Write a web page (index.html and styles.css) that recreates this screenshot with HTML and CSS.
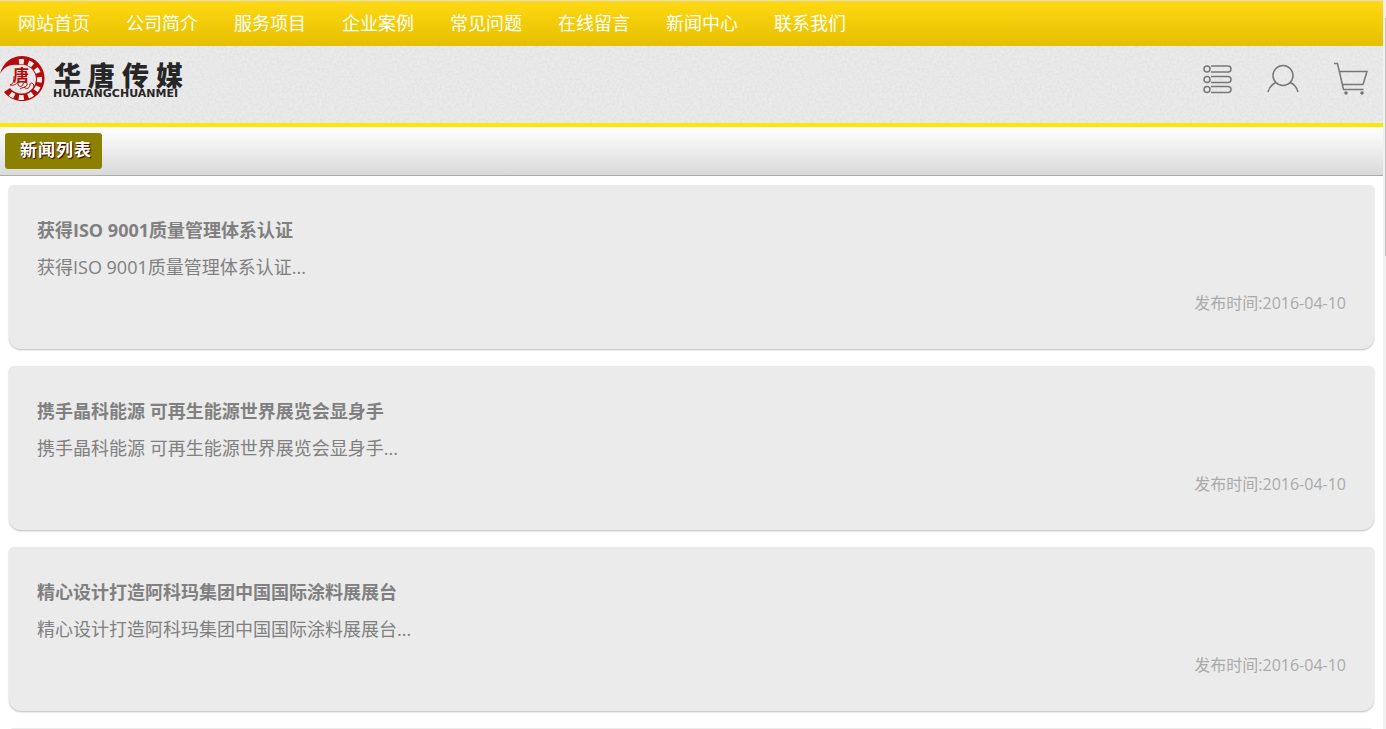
FILE: index.html
```
<!DOCTYPE html>
<html lang="zh-CN">
<head>
  <meta charset="UTF-8">
  <meta name="viewport" content="width=device-width, initial-scale=1.0">
  <title>新闻列表</title>
  <link rel="stylesheet" href="styles.css">
</head>
<body>

  <!-- Navigation -->
  <nav>
    <a href="#">网站首页</a>
    <a href="#">公司简介</a>
    <a href="#">服务项目</a>
    <a href="#">企业案例</a>
    <a href="#">常见问题</a>
    <a href="#">在线留言</a>
    <a href="#">新闻中心</a>
    <a href="#">联系我们</a>
  </nav>

  <!-- Header -->
  <header>
    <a class="logo" href="#" aria-label="华唐传媒">
      <svg width="190" height="50" viewBox="0 0 190 50">
        <path d="M0 21 C3 9 12 3 22 3 A22.500 22.500 0 1 1 4 39 L10 35 A14.500 14.500 0 1 0 18 12 C10 11 4 14 0 21 Z" fill="#b50a0a"/>
        <path class="logo-teeth" d="M19 8.700 A18 18 0 1 1 10.400 40.700"/>
        <text class="logo-seal" x="13" y="28">唐</text>
        <path d="M14 23 C14 29 13 31 10 32 C14 33 16 31 18 29 C17 34 22 35 23 31 C24 28 28 29 27 32 C26 35 22 34 20 36 M24 34 C27 37 30 35 30 31 C31 29 34 30 34 34" fill="none" stroke="#b50a0a" stroke-width="1"/>
        <g class="logo-name">
          <text x="54" y="33">华</text>
          <text x="88" y="33">唐</text>
          <text x="122" y="33">传</text>
          <text x="156" y="33">媒</text>
        </g>
        <text class="logo-latin" x="53" y="44">HUATANGCHUANMEI</text>
      </svg>
    </a>
    <div class="tools">
      <a href="#" aria-label="分类">
        <svg width="34" height="36" viewBox="0 0 34 36">
          <circle cx="9" cy="8" r="3"/>
          <path d="M13 5 H30 A3 3 0 0 1 30 11 H13"/>
          <circle cx="9" cy="18.500" r="3"/>
          <path d="M13 15.500 H30 A3 3 0 0 1 30 21.500 H13"/>
          <circle cx="9" cy="28.500" r="3"/>
          <path d="M13 25.500 H30 A3 3 0 0 1 30 31.500 H13"/>
        </svg>
      </a>
      <a href="#" aria-label="会员">
        <svg width="34" height="36" viewBox="0 0 34 36">
          <circle cx="17" cy="14.500" r="10"/>
          <path d="M10 21.500 C6 23 3 27 2 31 M24 21.500 C28 23 31 27 32 31"/>
        </svg>
      </a>
      <a href="#" aria-label="购物车">
        <svg width="34" height="36" viewBox="0 0 34 36">
          <path d="M0 2.500 H3.500 L9.500 28.500 H29.500 M5.500 10.500 H33 L29 23.500 H8.500"/>
          <circle class="wheel" cx="12" cy="32" r="1.800"/>
          <circle class="wheel" cx="28" cy="32" r="1.800"/>
        </svg>
      </a>
    </div>
  </header>

  <div class="title-bar">
    <h1>新闻列表</h1>
  </div>

  <!-- News list -->
  <main>
    <article>
      <h2>获得ISO 9001质量管理体系认证</h2>
      <p>获得ISO 9001质量管理体系认证...</p>
      <time datetime="2016-04-10">发布时间:2016-04-10</time>
    </article>
    <article>
      <h2>携手晶科能源 可再生能源世界展览会显身手</h2>
      <p>携手晶科能源 可再生能源世界展览会显身手...</p>
      <time datetime="2016-04-10">发布时间:2016-04-10</time>
    </article>
    <article>
      <h2>精心设计打造阿科玛集团中国国际涂料展展台</h2>
      <p>精心设计打造阿科玛集团中国国际涂料展展台...</p>
      <time datetime="2016-04-10">发布时间:2016-04-10</time>
    </article>
    <article></article>
  </main>

  <div class="scroll-track"><div class="scroll-thumb"></div></div>

</body>
</html>
```
FILE: styles.css
```
* {
  margin: 0;
  padding: 0;
  box-sizing: border-box;
}

html {
  height: 100%;
  overflow: hidden;
}

body {
  height: 100%;
  overflow: hidden;
  padding-right: 3px;
  font-family: "Open Sans", "Noto Sans CJK SC", sans-serif;
  font-size: 18px;
  color: #808080;
  background: #fff;
}

a {
  text-decoration: none;
}

/* Navigation */
nav {
  display: flex;
  height: 46px;
  border-top: 1px solid #ddd;
  background: linear-gradient(#ffd911, #e5be00);
}

nav a {
  padding: 0 18px;
  line-height: 44px;
  color: #fff;
}

/* Header */
header {
  display: flex;
  justify-content: space-between;
  align-items: flex-start;
  height: 81px;
  padding: 7px 15px 0 0;
  border-bottom: 4px solid #ffe600;
  background: #ebebeb url("data:image/svg+xml,%3Csvg xmlns='http://www.w3.org/2000/svg' width='150' height='150'%3E%3Cfilter id='n' x='0' y='0' width='1' height='1'%3E%3CfeTurbulence type='fractalNoise' baseFrequency='.4' numOctaves='2' stitchTiles='stitch'/%3E%3CfeColorMatrix values='0 0 0 0 0.4 0 0 0 0 0.4 0 0 0 0 0.4 .25 0 0 0 -.08'/%3E%3C/filter%3E%3Crect width='150' height='150' filter='url(%23n)'/%3E%3C/svg%3E");
}

.logo svg,
.tools svg {
  display: block;
}

.logo-teeth {
  fill: none;
  stroke: #f2eeee;
  stroke-width: 5px;
  stroke-dasharray: 5 4.4;
}

.logo-seal {
  font-size: 16px;
  font-weight: 700;
  fill: #b50a0a;
}

.logo-name {
  font-size: 27px;
  font-weight: 900;
  fill: #262626;
}

.logo-latin {
  font-family: "DejaVu Sans", sans-serif;
  font-size: 11px;
  font-weight: 700;
  fill: #262626;
}

.tools {
  display: flex;
  gap: 34px;
  padding-top: 8px;
}

.tools svg {
  fill: none;
  stroke: #777;
  stroke-width: 1.5px;
}

.tools .wheel {
  fill: #777;
  stroke: none;
}

/* Page title */
.title-bar {
  height: 49px;
  padding: 6px 5px;
  border-bottom: 1px solid #aaa;
  background: linear-gradient(#fff, #dadada);
}

.title-bar h1 {
  display: inline-block;
  height: 36px;
  padding: 0 10px 0 15px;
  border-radius: 3px;
  font-size: 17px;
  line-height: 34px;
  letter-spacing: 1px;
  color: #fff;
  text-shadow: 1px 1px 1px #300;
  background: #8c8000;
}

/* News list */
main {
  display: flex;
  flex-direction: column;
  gap: 17px;
  padding: 9px 9px 0;
}

article {
  height: 164px;
  padding: 27px 28px;
  border-radius: 5px 5px 12px 12px;
  background: #ebebeb;
  box-shadow: 0 1px 2px #bbb;
}

article h2 {
  font-size: 18px;
  line-height: 36px;
}

article p {
  line-height: 38px;
}

article time {
  display: block;
  font-size: 16px;
  line-height: 34px;
  text-align: right;
  color: #aaa;
}

/* Scrollbar strip */
.scroll-track {
  position: fixed;
  top: 0;
  right: 0;
  bottom: 0;
  width: 3px;
  padding: 18px 0 0 2px;
  background: #f0f0f0;
}

.scroll-thumb {
  height: 238px;
  background: #c1c1c1;
}
```
